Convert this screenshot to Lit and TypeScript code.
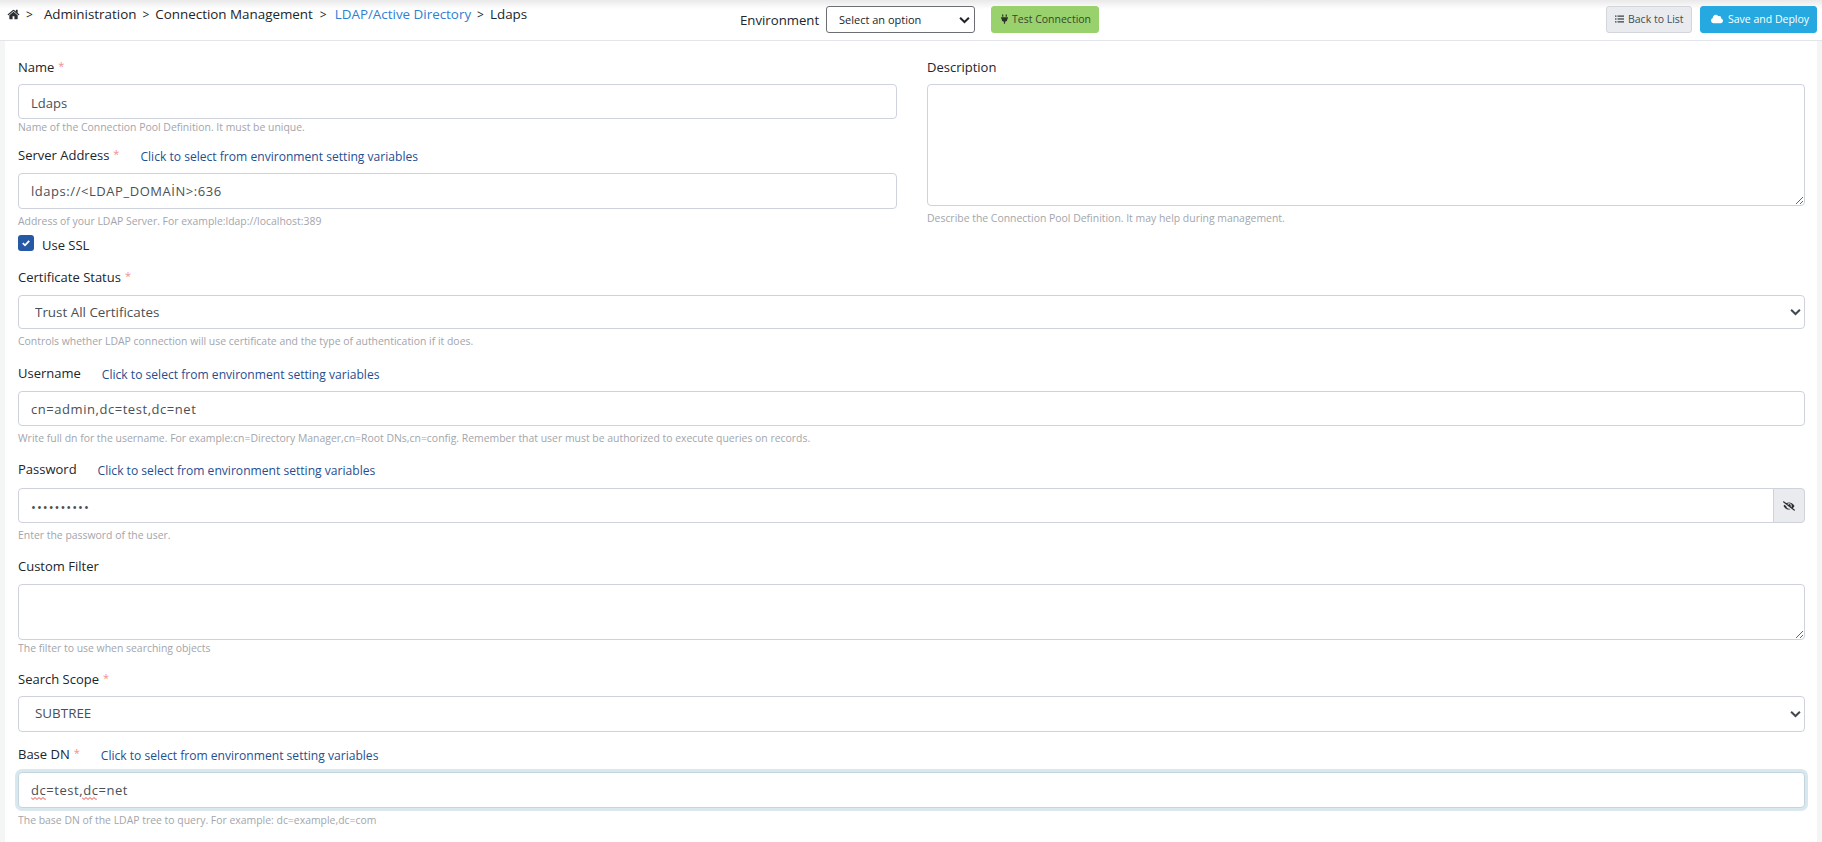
import { css, html, LitElement, nothing } from "lit";
import { customElement } from "lit/decorators.js";

const HOME =
  "M1472 992v480q0 26-19 45t-45 19h-384v-384h-256v384h-384q-26 0-45-19t-19-45v-480q0-1 .5-3t.5-3l575-474 575 474q1 2 1 6zm223-69l-62 74q-8 9-21 11h-3q-13 0-21-7l-692-577-692 577q-12 8-24 7-13-2-21-11l-62-74q-8-10-7-23.500t11-21.500l719-599q32-26 76-26t76 26l244 204v-195q0-14 9-23t23-9h192q14 0 23 9t9 23v408l219 182q10 8 11 21.500t-7 23.500z";
const PLUG =
  "M320,32a32,32,0,0,0-64,0v96h64Zm48,128H16A16,16,0,0,0,0,176v32a16,16,0,0,0,16,16H32v32A160.07,160.07,0,0,0,160,412.8V512h64V412.8A160.07,160.07,0,0,0,352,256V224h16a16,16,0,0,0,16-16V176A16,16,0,0,0,368,160ZM128,32a32,32,0,0,0-64,0v96h64Z";
const CLOUD =
  "M537.6 226.6c4.1-10.7 6.4-22.4 6.4-34.6 0-53-43-96-96-96-19.7 0-38.1 6-53.3 16.2C367 64.2 315.3 32 256 32c-88.400 0-160 71.600-160 160 0 2.700.1 5.400.2 8.100C40.200 219.800 0 273.200 0 336c0 79.500 64.500 144 144 144h368c70.700 0 128-57.300 128-128 0-61.900-44-113.600-102.400-125.400z";
const EYE_SLASH =
  "M320 400c-75.850 0-137.250-58.710-142.900-133.110L72.200 185.820c-13.790 17.300-26.480 35.590-36.720 55.590a32.350 32.350 0 0 0 0 29.190C89.710 376.410 197.070 448 320 448c26.910 0 52.870-4 77.890-10.460L346 397.390a144.130 144.130 0 0 1-26 2.610zm313.820 58.100l-110.550-85.440a331.250 331.250 0 0 0 81.250-102.070 32.350 32.350 0 0 0 0-29.190C550.290 135.590 442.930 64 320 64a308.150 308.150 0 0 0-147.320 37.700L45.460 3.370A16 16 0 0 0 23 6.180L3.370 31.450A16 16 0 0 0 6.180 53.900l588.360 454.730a16 16 0 0 0 22.460-2.810l19.640-25.270a16 16 0 0 0-2.820-22.450zm-183.720-142l-39.300-30.380A94.750 94.750 0 0 0 416 256a94.760 94.760 0 0 0-121.310-92.210A47.650 47.650 0 0 1 304 192a46.640 46.640 0 0 1-1.540 10l-73.610-56.890A142.310 142.310 0 0 1 320 112a143.920 143.920 0 0 1 144 144c0 21.630-5.290 41.790-13.900 60.110z";

const LINK_TEXT = "Click to select from environment setting variables";

const chevron = html`<svg class="chevron" viewBox="0 0 12 8" aria-hidden="true">
  <path d="M1.2 1.6 6 6.2l4.800-4.600" fill="none" stroke="currentColor" stroke-width="2.200" />
</svg>`;

const squiggle = (cls: string) => html`<svg class="squiggle ${cls}" viewBox="0 0 15 3" aria-hidden="true">
  <path d="M0 .5l2 2 2-2 2 2 2-2 2 2 2-2 2 2 1-1" fill="none" stroke="#e33" stroke-width=".9" />
</svg>`;

@customElement("app-root")
export class AppRoot extends LitElement {
  static styles = css`
    :host {
      display: block;
      height: 842px;
      overflow: hidden;
      background: #f4f6f6;
      font-family: "Open Sans", "Noto Sans", sans-serif;
      font-size: 13px;
      color: #212529;
    }

    * {
      box-sizing: border-box;
    }

    /* top bar */
    .topbar {
      display: grid;
      grid-template-columns: 740px auto 1fr;
      height: 41px;
      padding: 6px 5px 0 0;
      background: linear-gradient(#e9e9e9, #fff 9px);
      border-bottom: 1px solid #e3e5ea;
    }

    .crumbs {
      display: flex;
      align-items: center;
      height: 16px;
      padding-left: 7px;
      color: #212529;
      font-size: 13.400px;
      white-space: nowrap;
    }

    .crumbs .home {
      width: 13px;
      height: 13px;
      fill: #2b2f33;
    }

    .sep {
      margin: 0 6px;
      font-size: 12px;
    }

    .sep.first {
      margin: 0 11px 0 6px;
    }

    .sep.wide {
      margin: 0 8px 0 7px;
    }

    .crumbs a {
      color: #2f80d3;
      text-decoration: none;
    }

    .env {
      display: flex;
      align-items: center;
      height: 27px;
    }

    .env-label {
      width: 86px;
      color: #212529;
      font-size: 13.200px;
    }

    .env-select {
      position: relative;
      width: 149px;
      height: 27px;
      color: #212529;
    }

    .env-select select {
      width: 100%;
      height: 100%;
      padding: 0 0 0 12px;
      border: 1px solid #6b6f73;
      border-radius: 3px;
      background: #fff;
      color: #212529;
      font: inherit;
      font-size: 11px;
      appearance: none;
      outline: none;
    }

    .env-select .chevron {
      right: 5px;
    }

    .btn {
      display: inline-flex;
      align-items: center;
      height: 27px;
      border: 1px solid transparent;
      border-radius: 3px;
      font-family: inherit;
      font-size: 10.500px;
      white-space: nowrap;
    }

    .btn svg {
      flex: none;
    }

    .btn-test {
      width: 108px;
      margin-left: 16px;
      padding: 0 0 2px 9px;
      gap: 4px;
      background: #99d16d;
      border-color: #99d16d;
      color: #37472d;
    }

    .btn-test svg {
      width: 7px;
      height: 10px;
      fill: #2c3327;
    }

    .actions {
      display: flex;
      justify-content: flex-end;
      gap: 8px;
    }

    .btn-back {
      width: 86px;
      padding: 0 0 2px 8px;
      gap: 4px;
      background: #e9ebef;
      border-color: #d2d5db;
      color: #464c54;
    }

    .btn-back svg {
      width: 9px;
      height: 8px;
      fill: #3b4047;
    }

    .btn-save {
      width: 117px;
      padding: 0 0 2px 10px;
      gap: 5px;
      background: #26a9e0;
      border-color: #26a9e0;
      color: #fff;
    }

    .btn-save svg {
      width: 12px;
      height: 10px;
      fill: #fff;
    }

    /* form card */
    .card {
      height: 801px;
      margin: 0 5px;
      padding: 16px 12px 0 13px;
      background: #fff;
    }

    .top-grid {
      display: grid;
      grid-template-columns: 879px 878px;
      column-gap: 30px;
    }

    .field {
      margin-top: 13px;
    }

    .field.flush {
      margin-top: 0;
    }

    .field.m10 {
      margin-top: 10px;
    }

    .field.m12 {
      margin-top: 12px;
    }

    .field.m14 {
      margin-top: 14px;
    }

    .field.m16 {
      margin-top: 16px;
    }

    .label-row {
      display: flex;
      align-items: center;
      height: 20px;
      margin-bottom: 7px;
    }

    .label-row.far {
      margin-bottom: 8px;
    }

    .label-row.farther {
      margin-bottom: 9px;
    }

    .label-row label {
      color: #212529;
    }

    .req {
      margin-left: 4px;
      color: #f08f8f;
      font-size: 11px;
      position: relative;
      top: -2px;
    }

    .var-link {
      margin: 3.500px 0 0 21px;
      color: #1f4f92;
      font-size: 12.100px;
      text-decoration: none;
    }

    .control {
      position: relative;
      display: flex;
    }

    .box {
      width: 100%;
    }

    input,
    textarea,
    .select {
      width: 100%;
      border: 1px solid #cdd2dc;
      border-radius: 4px;
      background: #fff;
      color: #495057;
      font: inherit;
      outline: none;
    }

    input,
    textarea {
      padding: 0 12px;
    }

    select.select {
      padding: 0 16px;
      height: 100%;
      font-size: 13.400px;
      appearance: none;
    }

    select.up {
      padding-bottom: 2px;
    }

    textarea {
      display: block;
      padding-top: 6px;
      resize: both;
    }

    input.down {
      padding-top: 2px;
    }

    input.spaced {
      letter-spacing: 0.550px;
    }

    .h34 {
      height: 34px;
    }

    .h35 {
      height: 35px;
    }

    .h36 {
      height: 36px;
    }

    .h56 {
      height: 56px;
    }

    .h122 {
      height: 122px;
    }

    .control .chevron {
      right: 4px;
      color: #43484e;
    }

    .chevron {
      position: absolute;
      top: 50%;
      width: 11px;
      height: 8px;
      transform: translateY(-50%);
      pointer-events: none;
    }

    .password {
      letter-spacing: 1px;
    }

    .password-input {
      border-radius: 4px 0 0 4px;
    }

    .addon {
      display: flex;
      flex: none;
      align-items: center;
      justify-content: center;
      width: 32px;
      margin-left: -1px;
      border: 1px solid #cdd2dc;
      border-radius: 0 4px 4px 0;
      background: #e9ebef;
    }

    .addon svg {
      width: 12px;
      height: 10px;
      fill: #2b2f33;
    }

    .focused {
      border-color: #c3d6e0;
      box-shadow: 0 0 0 3px #d9e7ee;
    }

    .squiggle {
      position: absolute;
      top: 25px;
      width: 15px;
      height: 3px;
    }

    .squiggle.first {
      left: 13px;
    }

    .squiggle.second {
      left: 64px;
    }

    .help {
      margin-top: 5px;
      color: #a2a6ac;
      font-size: 10.430px;
      line-height: 16px;
    }

    .help.t0 {
      margin-top: 0;
    }

    .help.t4 {
      margin-top: 4px;
    }

    .check-row {
      display: flex;
      height: 16px;
      margin-top: 6px;
    }

    .check {
      display: flex;
      align-items: center;
      justify-content: center;
      width: 16px;
      height: 16px;
      border-radius: 3px;
      background: #2558a5;
    }

    .check svg {
      width: 10px;
      height: 10px;
    }

    .check-label {
      margin: 1px 0 0 8px;
      line-height: 18px;
      color: #212529;
    }
  `;

  // label row + control + help line, the spacing differs a bit per field
  private field(opts: {
    label: string;
    required?: boolean;
    link?: boolean;
    rowCls?: string;
    cls?: string;
    helpCls?: string;
    help?: string;
    control: unknown;
  }) {
    return html`<div class="field ${opts.cls ?? ""}">
      <div class="label-row ${opts.rowCls ?? ""}">
        <label>${opts.label}</label>
        ${opts.required ? html`<span class="req">*</span>` : nothing}
        ${opts.link ? html`<a class="var-link" href="#">${LINK_TEXT}</a>` : nothing}
      </div>
      <div class="control">${opts.control}</div>
      ${opts.help ? html`<div class="help ${opts.helpCls ?? ""}">${opts.help}</div>` : nothing}
    </div>`;
  }

  private renderTopbar() {
    return html`<header class="topbar">
      <nav class="crumbs">
        <svg class="home" viewBox="0 0 1792 1792" aria-hidden="true"><path d=${HOME} /></svg>
        <span class="sep first">&gt;</span>
        <span>Administration</span>
        <span class="sep">&gt;</span>
        <span>Connection Management</span>
        <span class="sep wide">&gt;</span>
        <a href="#">LDAP/Active Directory</a>
        <span class="sep">&gt;</span>
        <span>Ldaps</span>
      </nav>
      <div class="env">
        <span class="env-label">Environment</span>
        <div class="env-select">
          <select><option>Select an option</option></select>
          ${chevron}
        </div>
        <button class="btn btn-test">
          <svg viewBox="0 0 384 512" aria-hidden="true"><path d=${PLUG} /></svg>
          Test Connection
        </button>
      </div>
      <div class="actions">
        <button class="btn btn-back">
          <svg viewBox="0 0 18 16" aria-hidden="true">
            <rect x="0" y="1" width="3" height="2.500" />
            <rect x="5" y="1" width="13" height="2.500" />
            <rect x="0" y="6.700" width="3" height="2.500" />
            <rect x="5" y="6.700" width="13" height="2.500" />
            <rect x="0" y="12.500" width="3" height="2.500" />
            <rect x="5" y="12.500" width="13" height="2.500" />
          </svg>
          Back to List
        </button>
        <button class="btn btn-save">
          <svg viewBox="0 0 640 512" aria-hidden="true"><path d=${CLOUD} /></svg>
          Save and Deploy
        </button>
      </div>
    </header>`;
  }

  render() {
    return html`${this.renderTopbar()}
      <main class="card">
        <div class="top-grid">
          <div>
            ${this.field({
              cls: "flush",
              label: "Name",
              required: true,
              helpCls: "t0",
              help: "Name of the Connection Pool Definition. It must be unique.",
              control: html`<input class="h35 down" .value=${"Ldaps"} />`,
            })}
            ${this.field({
              cls: "m10",
              label: "Server Address",
              required: true,
              link: true,
              rowCls: "far",
              helpCls: "t4",
              help: "Address of your LDAP Server. For example:ldap://localhost:389",
              control: html`<input class="h36 spaced" .value=${"ldaps://<LDAP_DOMAİN>:636"} />`,
            })}
            <div class="check-row">
              <span class="check">
                <svg viewBox="0 0 10 10" aria-hidden="true">
                  <path d="M1.800 5.200 4 7.300l4.200-4.500" fill="none" stroke="#fff" stroke-width="1.800" />
                </svg>
              </span>
              <span class="check-label">Use SSL</span>
            </div>
          </div>
          ${this.field({
            cls: "flush",
            label: "Description",
            helpCls: "t4",
            help: "Describe the Connection Pool Definition. It may help during management.",
            control: html`<textarea class="h122"></textarea>`,
          })}
        </div>
        ${this.field({
          cls: "m16",
          label: "Certificate Status",
          required: true,
          rowCls: "far",
          helpCls: "t4",
          help: "Controls whether LDAP connection will use certificate and the type of authentication if it does.",
          control: html`<div class="box h34">
              <select class="select"><option>Trust All Certificates</option></select>
            </div>
            ${chevron}`,
        })}
        ${this.field({
          cls: "m14",
          label: "Username",
          link: true,
          rowCls: "far",
          helpCls: "t4",
          help: "Write full dn for the username. For example:cn=Directory Manager,cn=Root DNs,cn=config. Remember that user must be authorized to execute queries on records.",
          control: html`<input class="h35 spaced" .value=${"cn=admin,dc=test,dc=net"} />`,
        })}
        ${this.field({
          label: "Password",
          link: true,
          rowCls: "farther",
          helpCls: "t4",
          help: "Enter the password of the user.",
          control: html`<input class="h35 down password password-input" type="password" .value=${"ldapsecret"} />
            <span class="addon">
              <svg viewBox="0 0 640 512" aria-hidden="true"><path d=${EYE_SLASH} /></svg>
            </span>`,
        })}
        ${this.field({
          label: "Custom Filter",
          rowCls: "far",
          helpCls: "t0",
          help: "The filter to use when searching objects",
          control: html`<textarea class="h56"></textarea>`,
        })}
        ${this.field({
          label: "Search Scope",
          required: true,
          control: html`<div class="box h36">
              <select class="select up"><option>SUBTREE</option></select>
            </div>
            ${chevron}`,
        })}
        ${this.field({
          cls: "m12",
          label: "Base DN",
          required: true,
          link: true,
          rowCls: "far",
          helpCls: "t4",
          help: "The base DN of the LDAP tree to query. For example: dc=example,dc=com",
          control: html`<input class="h36 focused spaced" .value=${"dc=test,dc=net"} />
            ${squiggle("first")} ${squiggle("second")}`,
        })}
      </main>`;
  }
}
